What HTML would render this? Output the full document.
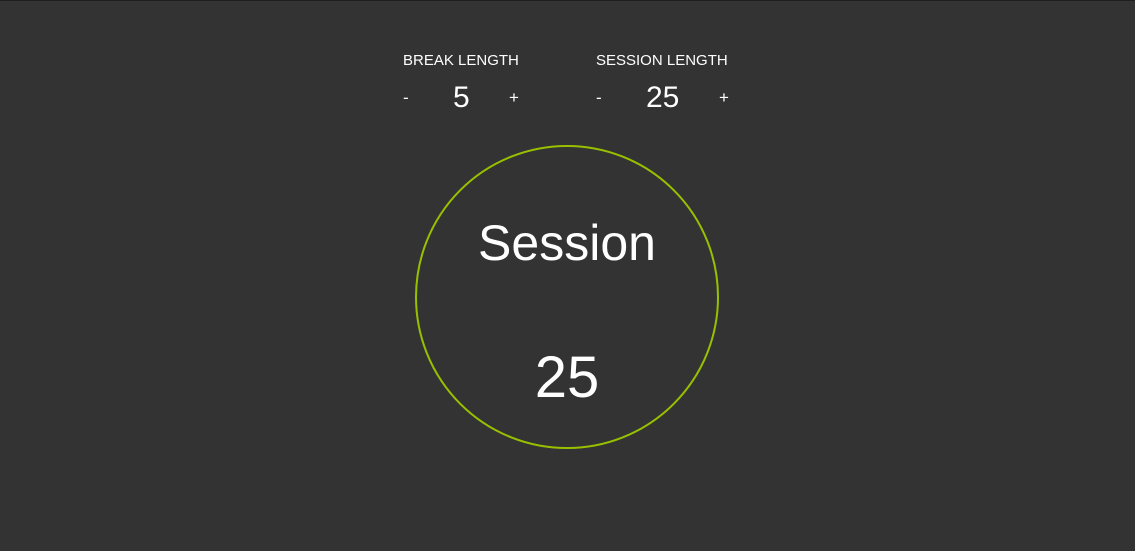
<!DOCTYPE html>
<html><head><style>
body{margin:0;width:1135px;height:551px;background:#333;color:#fff;font-family:"Liberation Sans",sans-serif;overflow:hidden;border-top:1px solid #1e1e1e;box-sizing:border-box;position:relative}
.t{position:absolute;white-space:nowrap}
.lab{font-size:15px;top:51px}
.sm{font-size:17px;top:87px}
.num{font-size:30px;top:80px}
.c{position:absolute;left:415px;top:144px;width:300px;height:300px;border:2px solid #99c000;border-radius:50%}
</style></head><body>
<div class="t lab" style="left:403px">BREAK LENGTH</div>
<div class="t lab" style="left:596px">SESSION LENGTH</div>
<div class="t sm" style="left:403px">-</div>
<div class="t num" style="left:453px">5</div>
<div class="t sm" style="left:509px">+</div>
<div class="t sm" style="left:596px">-</div>
<div class="t num" style="left:646px">25</div>
<div class="t sm" style="left:719px">+</div>
<div class="c"></div>
<div class="t" style="left:416px;width:302px;text-align:center;top:213px;font-size:50px">Session</div>
<div class="t" style="left:416px;width:302px;text-align:center;top:343px;font-size:58px">25</div>
</body></html>
